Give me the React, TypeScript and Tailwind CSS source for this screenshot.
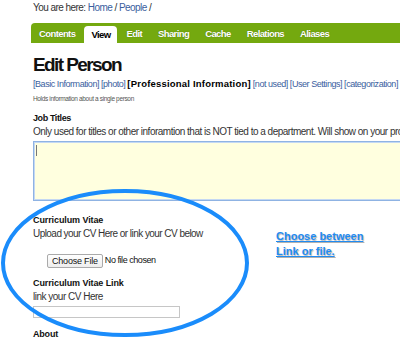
const sans = "font-['Liberation_Sans',Arial,sans-serif]";

const tabs = ["Contents", "View", "Edit", "Sharing", "Cache", "Relations", "Aliases"];

const sections = [
  { label: "[Basic Information]", link: true },
  { label: "[photo]", link: true },
  { label: "[Professional Information]", link: false },
  { label: "[not used]", link: true },
  { label: "[User Settings]", link: true },
  { label: "[categorization]", link: true },
];

export default function App() {
  return (
    <div className={`relative w-[400px] h-[340px] overflow-hidden bg-white text-[#222] ${sans}`}>
      <div className="pl-[33px]">
        {/* Breadcrumb */}
        <div className="h-[16px] leading-[16px] text-[10px] tracking-[-0.55px] text-[#333] whitespace-nowrap">
          You are here: <span className="text-[#3a5e9e]">Home</span> /{" "}
          <span className="text-[#3a5e9e]">People</span> /
        </div>

        {/* Tabs */}
        <div className="mt-[7px] -ml-[2px] h-[20px] bg-[#74a90f] flex items-end pl-[1px] gap-[2px] rounded-tl-[4px]">
          {tabs.map((t) =>
            t === "View" ? (
              <div
                key={t}
                className="h-[17px] px-[7px] bg-white rounded-t-[4px] text-[9.5px] tracking-[-0.6px] font-bold text-black leading-[17px]"
              >
                {t}
              </div>
            ) : (
              <div
                key={t}
                className="h-[20px] px-[7px] text-[9.5px] tracking-[-0.6px] font-bold text-white leading-[22px] [text-shadow:0_0_1px_rgba(0,0,0,0.35)]"
              >
                {t}
              </div>
            )
          )}
        </div>

        {/* Title */}
        <h1 className="mt-[10px] h-[24px] leading-[24px] text-[19px] font-bold text-[#111] tracking-[-1.6px]">
          Edit Person
        </h1>

        {/* Section links */}
        <div className="h-[14px] leading-[14px] whitespace-nowrap flex gap-[2px]">
          {sections.map((s) =>
            s.link ? (
              <span key={s.label} className="text-[9px] tracking-[-0.45px] text-[#3a5e9e]">
                {s.label}
              </span>
            ) : (
              <span key={s.label} className="text-[9.5px] tracking-[0.2px] font-bold text-black">
                {s.label}
              </span>
            )
          )}
        </div>

        <div className="mt-[2px] h-[12px] leading-[12px] text-[6.5px] tracking-[-0.35px] text-[#555]">
          Holds information about a single person
        </div>

        {/* Job titles */}
        <div className="mt-[6px] h-[14px] leading-[14px] text-[9px] tracking-[-0.4px] font-bold text-[#111]">
          Job Titles
        </div>
        <div className="h-[13px] leading-[13px] text-[10px] tracking-[-0.5px] text-[#333] whitespace-nowrap">
          Only used for titles or other inforamtion that is NOT tied to a department. Will show on your profile.
        </div>
        <div className="mt-[3px] h-[60px] w-[400px] bg-[#ffffdf] border border-[#8fb3e3] shadow-[inset_0_0_0_1px_#c4d8f3]">
          <div className="ml-[2px] mt-[3px] w-[1px] h-[11px] bg-[#777]" />
        </div>

        {/* Curriculum vitae */}
        <div className="mt-[12px] h-[14px] leading-[14px] text-[9px] tracking-[-0.1px] font-bold text-[#111]">
          Curriculum Vitae
        </div>
        <div className="h-[13px] leading-[13px] text-[10px] tracking-[-0.55px] text-[#333] whitespace-nowrap">
          Upload your CV Here or link your CV below
        </div>
        <div className="mt-[14px] ml-[14px] flex items-center gap-[2px] h-[14px]">
          <div className="h-[14px] px-[4px] leading-[12px] text-[9px] tracking-[-0.2px] text-[#111] border border-[#aaa] rounded-[2px] bg-gradient-to-b from-white to-[#eee]">
            Choose File
          </div>
          <span className="text-[9px] tracking-[-0.45px] text-[#111]">No file chosen</span>
        </div>

        <div className="mt-[8px] h-[14px] leading-[14px] text-[9px] tracking-[-0.1px] font-bold text-[#111]">
          Curriculum Vitae Link
        </div>
        <div className="h-[13px] leading-[13px] text-[10px] tracking-[-0.5px] text-[#333]">link your CV Here</div>
        <div className="mt-[3px] h-[12px] w-[147px] border border-[#c6c6c6] bg-white" />

        <div className="mt-[9px] h-[14px] leading-[14px] text-[9px] tracking-[-0.2px] font-bold text-[#111]">About</div>
      </div>

      {/* Annotation overlay */}
      <svg className="absolute inset-0 pointer-events-none" width="400" height="340">
        <ellipse cx="125" cy="263" rx="122" ry="72" fill="none" stroke="#1a8cfb" strokeWidth="4" />
      </svg>
      <div className="absolute left-[276px] top-[229px] text-[11px] leading-[15px] font-bold text-[#1f8bf2] underline [text-shadow:1px_1px_1px_rgba(0,0,0,0.3)]">
        <div>Choose between</div>
        <div>Link or file.</div>
      </div>
    </div>
  );
}
